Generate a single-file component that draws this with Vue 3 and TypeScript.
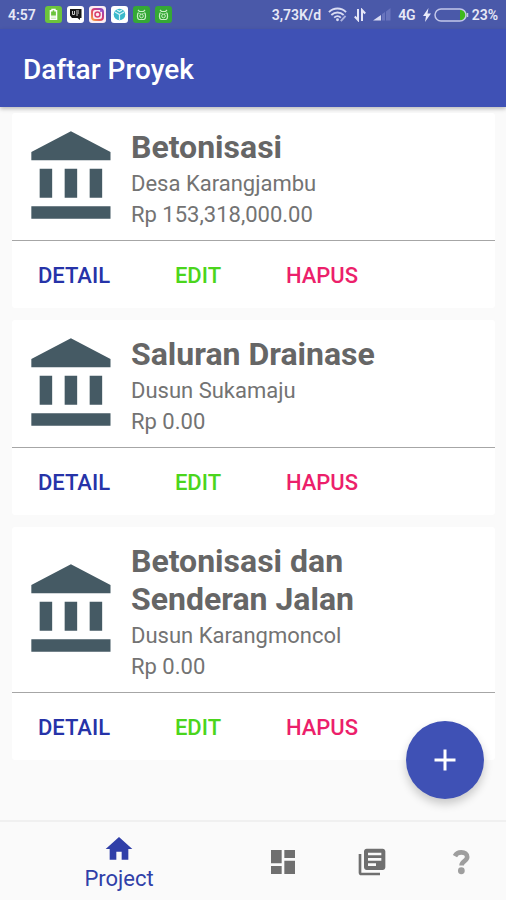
<script setup lang="ts">
interface Project {
  id: number
  name: string
  place: string
  budget: string
}

const projects: Project[] = [
  { id: 1, name: 'Betonisasi', place: 'Desa Karangjambu', budget: 'Rp 153,318,000.00' },
  { id: 2, name: 'Saluran Drainase', place: 'Dusun Sukamaju', budget: 'Rp 0.00' },
  { id: 3, name: 'Betonisasi dan Senderan Jalan', place: 'Dusun Karangmoncol', budget: 'Rp 0.00' },
]
</script>

<template>
  <div class="screen">
    <div class="status">
      <span class="clock">4:57</span>
      <div class="notices">
        <svg viewBox="0 0 17 17">
          <rect width="17" height="17" rx="3" fill="#6cc43c" />
          <path d="M7 3.500h3v1.200h1.600v8.600H5.400V4.700H7z" fill="none" stroke="#fff" stroke-width="1.400" />
          <path d="M6 9.500h5v3H6z" fill="#e9f8df" />
        </svg>
        <svg viewBox="0 0 17 17">
          <rect width="17" height="17" rx="3" fill="#fff" />
          <path d="M3 3h11.500v9H13v2l-2.500-2H5L3 9.500z" fill="#151515" />
          <path d="M5.500 5v3.500h2V5M9 5h3M9 7h3M9 9h2" fill="none" stroke="#ccc" stroke-width="1" />
        </svg>
        <svg viewBox="0 0 17 17">
          <defs>
            <linearGradient id="camera" x1="0" y1="1" x2="1" y2="0">
              <stop offset="0" stop-color="#f5a142" />
              <stop offset=".5" stop-color="#dc3c6a" />
              <stop offset="1" stop-color="#8a48c8" />
            </linearGradient>
          </defs>
          <rect width="17" height="17" rx="3" fill="#fbeef2" />
          <rect x="3" y="3" width="11" height="11" rx="3" fill="none" stroke="url(#camera)" stroke-width="2" />
          <circle cx="8.500" cy="8.500" r="2.500" fill="none" stroke="#d8406f" stroke-width="1.500" />
          <circle cx="12" cy="5" r="1" fill="#8a48c8" />
        </svg>
        <svg viewBox="0 0 17 17">
          <rect width="17" height="17" rx="3" fill="#fff" />
          <circle cx="8.500" cy="8.500" r="5.800" fill="#3bb9cb" />
          <path d="M4 6l4.500 2.500L13 6M8.500 8.500V14M6 4l2.500 1.500L11 4" fill="none" stroke="#d8f5f8" stroke-width="1.200" />
        </svg>
        <svg v-for="n in 2" :key="n" viewBox="0 0 17 17">
          <rect width="17" height="17" rx="3" fill="#35a836" />
          <path d="M5 4l1.500 1.500h4L12 4M5.500 6.500C4 8 4 13 6 13.500h5c2-.5 2-5.500.5-7" fill="none" stroke="#c8efc4" stroke-width="1.200" />
          <circle cx="8.500" cy="10" r="1.800" fill="none" stroke="#c8efc4" />
          <path d="M6.500 7.500h1M9.500 7.500h1" stroke="#c8efc4" />
        </svg>
      </div>
      <div class="signals">
        <span>3,73K/d</span>
        <svg class="wifi" viewBox="0 0 20 15" fill="none" stroke="#d9dcf3" stroke-width="2">
          <path d="M1 5c5-5 13-5 18 0M3.500 8c3.800-3.500 9.200-3.500 13 0M6.500 10.800c2.200-2 4.800-2 7 0" />
          <circle cx="10" cy="13" r="1.500" fill="#d9dcf3" stroke="none" />
          <path d="M13.500 14.500l5-5.500" stroke="#aeb4df" />
        </svg>
        <svg class="arrows" viewBox="0 0 12 14" fill="none" stroke="#e4e6f7" stroke-width="2">
          <path d="M4 1v11L.8 8.500M8 13V2l3.200 3.500" />
        </svg>
        <svg class="bars" viewBox="0 0 18 13">
          <path d="M0 12.500L8 7v5.500z" fill="#d9dcf3" />
          <path d="M9 6l3-2v8.500H9zM13 3.500L17.500 0v12.500H13z" fill="#6874bd" />
        </svg>
        <span>4G</span>
        <div class="power">
          <svg class="bolt" viewBox="0 0 8 14"><path d="M5.500 0L0 8h3l-1 6 6-8.500H4.500z" fill="#e9ebfa" /></svg>
          <svg class="battery" viewBox="0 0 35 14">
            <path d="M26 2h2a5 5 0 0 1 0 10h-2z" fill="#3fba1c" />
            <rect x="1" y="1" width="31" height="12" rx="6" fill="none" stroke="#c3c8ea" stroke-width="1.500" />
            <path d="M33.500 5v4" stroke="#c3c8ea" stroke-width="1.500" />
          </svg>
          <span>23%</span>
        </div>
      </div>
    </div>

    <header class="appbar">
      <h1>Daftar Proyek</h1>
    </header>

    <main class="list">
      <article v-for="project in projects" :key="project.id" class="card">
        <div class="summary">
          <svg class="bank" viewBox="0 0 24 24" fill="#455a64">
            <path d="M4 10v7h3v-7H4zm6 0v7h3v-7h-3zM2 22h19v-3H2v3zm14-12v7h3v-7h-3zm-4.500-9L2 6v2h19V6l-9.500-5z" />
          </svg>
          <div class="details">
            <h2>{{ project.name }}</h2>
            <p>{{ project.place }}</p>
            <p>{{ project.budget }}</p>
          </div>
        </div>
        <div class="actions">
          <button type="button" class="detail">DETAIL</button>
          <button type="button" class="edit">EDIT</button>
          <button type="button" class="remove">HAPUS</button>
        </div>
      </article>
    </main>

    <button type="button" class="fab" aria-label="+">
      <svg viewBox="0 0 24 24" fill="#fff"><path d="M19 13h-6v6h-2v-6H5v-2h6V5h2v6h6v2z" /></svg>
    </button>

    <nav class="tabs">
      <a href="#project" class="tab active">
        <svg viewBox="0 0 24 24"><path d="M10 20v-6h4v6h5v-8h3L12 3 2 12h3v8z" /></svg>
        <span>Project</span>
      </a>
      <a href="#dashboard" class="tab">
        <svg viewBox="0 0 24 24"><path d="M3 13h8V3H3v10zm0 8h8v-6H3v6zm10 0h8V11h-8v10zm0-18v6h8V3h-8z" /></svg>
      </a>
      <a href="#library" class="tab">
        <svg viewBox="0 0 24 24">
          <path d="M4 6H2v14c0 1.100.9 2 2 2h14v-2H4V6zm16-4H8c-1.100 0-2 .9-2 2v12c0 1.100.9 2 2 2h12c1.100 0 2-.9 2-2V4c0-1.100-.9-2-2-2zm-1 9H9V9h10v2zm-4 4H9v-2h6v2zm4-8H9V5h10v2z" />
        </svg>
      </a>
      <a href="#help" class="tab help">
        <svg viewBox="0 0 24 24">
          <path d="M6.800 7C8 4.600 9.900 3.800 12.300 3.800c3 0 5 1.500 5 4 0 3.500-4.800 3.500-4.800 7.200" fill="none" stroke="#9e9e9e" stroke-width="4" />
          <circle cx="12.300" cy="19.500" r="2.900" />
        </svg>
      </a>
    </nav>
  </div>
</template>

<style>
body {
  margin: 0;
}
</style>

<style scoped>
.screen {
  display: flex;
  flex-direction: column;
  min-height: 100vh;
  background: #fafafa;
  font-family: Roboto, "Liberation Sans", sans-serif;
}

.status {
  display: flex;
  align-items: center;
  height: 29px;
  box-sizing: border-box;
  padding: 0 8px;
  background: #4a59a9;
  color: #e6e8f6;
  font-size: 14px;
  font-weight: 600;
}

.notices {
  display: flex;
  gap: 5px;
  margin-left: 9px;
}

.notices svg {
  width: 17px;
  height: 17px;
}

.signals {
  display: flex;
  align-items: center;
  gap: 7px;
  margin-left: auto;
}

.wifi {
  width: 19px;
  height: 15px;
}

.arrows {
  width: 12px;
  height: 14px;
}

.bars {
  width: 18px;
  height: 13px;
}

.power {
  display: flex;
  align-items: center;
  gap: 3px;
}

.bolt {
  width: 8px;
  height: 14px;
}

.battery {
  width: 35px;
  height: 14px;
}

.appbar {
  display: flex;
  align-items: center;
  height: 78px;
  box-sizing: border-box;
  padding: 4px 23px 0;
  background: #3f51b5;
  box-shadow: 0 2px 4px rgba(0, 0, 0, 0.25);
}

h1 {
  margin: 0;
  color: #fff;
  font-size: 28px;
  font-weight: 500;
  line-height: 32px;
}

.list {
  display: flex;
  flex: 1;
  flex-direction: column;
  gap: 12px;
  padding: 6px 11px 60px 12px;
}

.card {
  border-radius: 3px;
  background: #fff;
}

.summary {
  display: flex;
  align-items: center;
  gap: 8px;
  padding: 0 11px;
  border-bottom: 1px solid #a6a6a6;
}

.bank {
  flex: none;
  width: 100px;
  height: 100px;
}

.details {
  max-width: 260px;
  padding: 15px 0 10px;
  color: #666;
}

h2 {
  margin: 0 0 2px;
  font-size: 32px;
  font-weight: 700;
  line-height: 38px;
}

p {
  margin: 0;
  color: #737373;
  font-size: 22px;
  line-height: 31px;
}

.actions {
  display: flex;
  height: 67px;
}

.actions button {
  width: 124px;
  padding: 2px 0 0;
  border: 0;
  background: none;
  font-family: inherit;
  font-size: 22px;
  font-weight: 500;
}

.actions .detail {
  color: #2633a8;
}

.actions .edit {
  color: #4bd51c;
}

.actions .remove {
  color: #ec1f6b;
}

.fab {
  position: fixed;
  right: 22px;
  bottom: 101px;
  display: grid;
  place-items: center;
  width: 78px;
  height: 78px;
  padding: 0;
  border: 0;
  border-radius: 50%;
  background: #3f51b5;
  box-shadow: 0 5px 10px rgba(0, 0, 0, 0.2);
}

.fab svg {
  width: 36px;
  height: 36px;
}

.tabs {
  display: grid;
  grid-template-columns: 8fr 3fr 3fr 3fr;
  height: 79px;
  border-top: 2px solid #f0f0f0;
}

.tab {
  display: flex;
  flex-direction: column;
  align-items: center;
  justify-content: center;
  color: #6f6f6f;
  font-size: 22px;
  line-height: 28px;
  text-decoration: none;
}

.tab svg {
  width: 32px;
  height: 32px;
  fill: currentColor;
}

.tab.active {
  padding-top: 3px;
  color: #303fa8;
}

.tab.help {
  color: #9e9e9e;
}

.tab.help svg {
  width: 28px;
  height: 28px;
}
</style>
